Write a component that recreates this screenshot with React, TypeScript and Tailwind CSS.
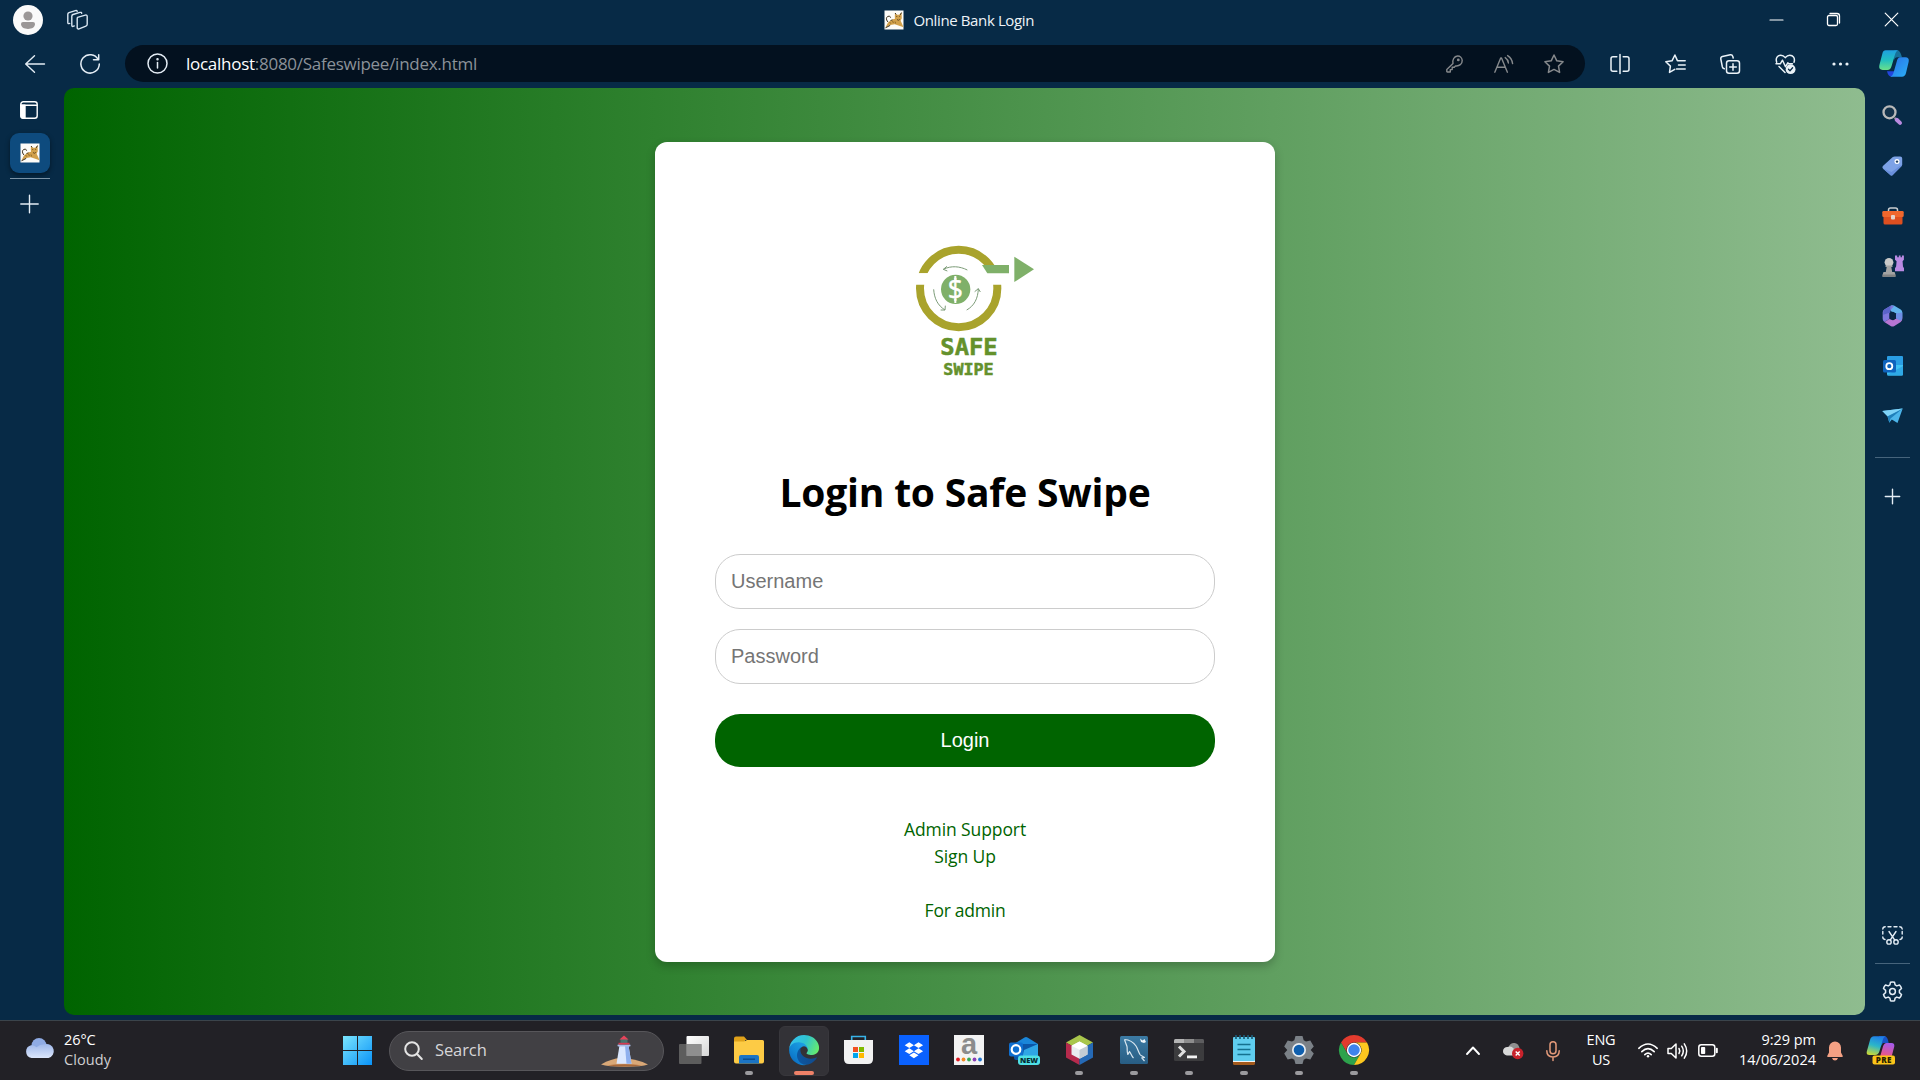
import React from "react";

type SvgProps = {
  w: number;
  h: number;
  vb?: string;
  className?: string;
  sw?: number;
  children: React.ReactNode;
};

/** Outline drawing that inherits the text colour. */
function Line({ w, h, vb, className = "", sw = 1.4, children }: SvgProps) {
  return (
    <svg
      width={w}
      height={h}
      viewBox={vb ?? `0 0 ${w} ${h}`}
      fill="none"
      stroke="currentColor"
      strokeWidth={sw}
      strokeLinecap="round"
      strokeLinejoin="round"
      className={`block shrink-0 overflow-visible ${className}`}
    >
      {children}
    </svg>
  );
}

/** Filled, multi-colour drawing. */
function Art({ w, h, vb, className = "", children }: SvgProps) {
  return (
    <svg width={w} height={h} viewBox={vb ?? `0 0 ${w} ${h}`} className={`block shrink-0 overflow-visible ${className}`}>
      {children}
    </svg>
  );
}

function CatIcon() {
  return (
    <Art w={20} h={20}>
      <rect x="0.5" y="0.5" width="19" height="19" fill="#fdfcf8" />
      <path d="M1.500 17.500 4 12.500 8 9.500l3-.8-.2-2.200L11 3l1.800 1.700h2.400L17.500 2.600l.3 5.600-1.200 2.600 1.200 2.400 1.700 4.100-4.300-1.500-4.400-1.600-4.600.8z" fill="#d2a14b" />
      <path d="m11 3 1.200 1.400M17.500 2.600 16.300 4.800M4 12C1.600 9.400 2 6.400 5 6.200c1 0 1.800.8 1.400 1.600M1.500 17.800l4.700-2.400M8 9.500l-1.400 1.500" stroke="#3c2f1c" strokeWidth="1" fill="none" />
      <path d="M12.300 6.500h.9M15.200 6.300h.9M13 9.500l1.400.8 1.400-.9" stroke="#5a421d" strokeWidth=".9" fill="none" />
      <path d="m8.400 10.500 1 2.500M5.500 12l1.300 1.600M11 11.500l.6 2" stroke="#8a6526" strokeWidth=".9" />
    </Art>
  );
}

function CopilotIcon() {
  return (
    <Art w={30} h={27} vb="0 0 90 81">
      <defs>
        <linearGradient id="cpA" x1="0" y1="0" x2="0" y2="1">
          <stop offset="0" stopColor="#1f9fe0" />
          <stop offset=".5" stopColor="#21bfc0" />
          <stop offset="1" stopColor="#6be08a" />
        </linearGradient>
        <linearGradient id="cpB" x1="0" y1="0" x2="1" y2="1">
          <stop offset="0" stopColor="#2a6fe8" />
          <stop offset="1" stopColor="#2ab0f5" />
        </linearGradient>
      </defs>
      <path d="M46 1h8c6 0 10 5 12 12l3 9H55c-6 0-9 5-10 10z" fill="#17719a" />
      <path d="M24 64h24l6-9-8 18c-2 5-5 7-9 7-6 0-11-6-13-16" fill="#2244dd" />
      <path d="M20 1h38c-5 1-8 6-10 13L38 47c-2 8-6 13-13 13H11C3 60-1 55 1 46L10 11C12 4 15 1 20 1" fill="url(#cpA)" />
      <path d="M64 22h15c8 0 12 5 10 13l-8 34c-2 8-6 11-12 11H34c5-1 8-6 10-13l9-32c2-8 5-13 11-13" fill="url(#cpB)" />
    </Art>
  );
}

function SafeSwipeLogo() {
  return (
    <Art w={170} h={170} vb="0 0 510 510">
      <defs>
        <clipPath id="ringTop">
          <path d="M0 0H510V136H262V160H0Z" />
        </clipPath>
        <clipPath id="ringBottom">
          <path d="M0 194H510V510H0Z" />
        </clipPath>
      </defs>
      <circle cx="206" cy="205.5" r="116" fill="none" stroke="#a9a32c" strokeWidth="24" clipPath="url(#ringTop)" />
      <circle cx="206" cy="205.5" r="116" fill="none" stroke="#a9a32c" strokeWidth="24" clipPath="url(#ringBottom)" />
      <path d="M276 135h81v25h-65z" fill="#7fb069" />
      <path d="M373 110 432 148 373 186Z" fill="#7fb069" />
      <circle cx="197" cy="208" r="44" fill="#7fb069" />
      <text x="196" y="236" textAnchor="middle" fontFamily="'Open Sans', sans-serif" fontSize="80" fill="#fff" stroke="#fff" strokeWidth="1.5">
        $
      </text>
      <path d="M196 168v12M196 237v12" stroke="#fff" strokeWidth="6" />
      <g fill="none" stroke="#7c9c78" strokeWidth="3">
        <path d="M232 150c-22-11-48-14-72-2m11-9-11 9 12 5" />
        <path d="M131 208c2 28 12 48 34 62m-13 0 13 0 1-13" />
        <path d="M230 270c22-12 34-34 35-64m-11 9 11-9 6 10" />
      </g>
      <g fill="#64912c" stroke="#64912c" strokeWidth="1.5" fontFamily="'DejaVu Sans Mono', monospace" fontWeight="700">
        <text x="151" y="404" fontSize="67" textLength="172" lengthAdjust="spacingAndGlyphs">
          SAFE
        </text>
        <text x="160" y="464.500" fontSize="47" textLength="151" lengthAdjust="spacingAndGlyphs">
          SWIPE
        </text>
      </g>
    </Art>
  );
}

function Slot({ className = "", children }: { className?: string; children: React.ReactNode }) {
  return <div className={`flex shrink-0 items-center justify-center ${className}`}>{children}</div>;
}

function TitleBar() {
  return (
    <div className="flex h-10 shrink-0 items-center">
      <div className="flex w-[884px] items-center pl-[13px]">
        <Art w={30} h={30}>
          <circle cx="15" cy="15" r="15" fill="#fafafa" />
          <circle cx="15" cy="11" r="4.6" fill="#9b9797" />
          <path d="M8 18.800q0-1.900 2-1.900h10q2 0 2 1.900c0 3.600-3 5.100-7 5.100s-7-1.500-7-5.100" fill="#9b9797" />
        </Art>
        <Line w={21} h={20} className="ml-6 text-[#d9e6f2]" sw={1.4}>
          <path d="M10.500 7.400 18.300 5.100q1.900-.4 1.900 1.500v7.700q0 1.400-1.300 1.900l-6.800 2.600q-1.900.6-1.900-1.400V9.100q0-1.300.3-1.700" />
          <path d="M7.300 15.900 6 16.400q-1.200.3-1.200-1.300V6.200q0-1.300 1.200-1.700L13 2.400q1.500-.3 1.700.9" />
          <path d="M2.700 13.400 1.900 13.600Q.8 13.800.8 12.500V4.300Q.8 3 2 2.600L8.400.6q1.400-.3 1.800.7" />
        </Line>
      </div>
      <CatIcon />
      <span className="ml-[9.500px] text-[15px] tracking-[-0.380px] text-[#eef3f8]">Online Bank Login</span>
      <div className="ml-auto flex text-white">
        <Slot className="w-[57.500px]">
          <Line w={13} h={13} sw={1.2}>
            <path d="M0 6h13" />
          </Line>
        </Slot>
        <Slot className="w-[57.500px]">
          <Line w={13} h={13} sw={1.3} className="-mt-px">
            <rect x=".5" y="2.500" width="10" height="10" rx="1.500" />
            <path d="M3 .5h7q2.500 0 2.500 2.500v7" />
          </Line>
        </Slot>
        <Slot className="w-[57.500px]">
          <Line w={13} h={13} sw={1.2} className="-mt-px">
            <path d="m.2.2 12.600 12.600M12.800.2.2 12.800" />
          </Line>
        </Slot>
      </div>
    </div>
  );
}

function Toolbar() {
  return (
    <div className="flex h-[47px] shrink-0 items-center text-[#e4edf5]">
      <Slot className="w-[70px]">
        <Line w={20} h={18}>
          <path d="M19.500 9H.8M9.500.7.7 9l8.800 8.300" />
        </Line>
      </Slot>
      <Slot className="w-10">
        <Line w={20} h={20} sw={1.5}>
          <path d="M18.200 5.500A9.200 9.200 0 1 0 19.300 10M18.700.8v5h-5.200" />
        </Line>
      </Slot>
      <div className="ml-[15px] flex h-[37px] w-[1460px] items-center rounded-full bg-[#03111f] pr-[6px] pl-[22px]">
        <Line w={21} h={21} sw={1.5}>
          <circle cx="10.500" cy="10.500" r="9.500" />
          <path d="M10.500 9.500v5.500" />
          <circle cx="10.500" cy="6.300" r=".5" fill="currentColor" />
        </Line>
        <span className="ml-[18px] text-[17px] tracking-[-0.27px] text-[#8b9299]">
          <span className="text-white">localhost</span>:8080/Safeswipee/index.html
        </span>
        <div className="ml-auto flex text-[#86898c]">
          <Slot className="w-[50px]">
            <Line w={17} h={18}>
              <path d="M.8 14.500 7 8.600C6.200 4.800 8 1.300 11.600 1 14 .9 16 3 16.200 5.400c.1 3.500-2.900 6-6.700 5.500L8.300 12.300H6.200v2.300H4.300V17H1.400q-.6 0-.6-.6z" />
              <circle cx="12.300" cy="4.900" r=".7" />
            </Line>
          </Slot>
          <Slot className="w-[50px]">
            <Line w={20} h={18}>
              <path d="M.8 17.200 6.700 3h.8l5.900 14.200M2.800 12.300h8.600M11.200 2.600q2.900 1.900 3.200 5.400M13.600.6q4.400 2.700 5 8" />
            </Line>
          </Slot>
          <Slot className="w-[50px]">
            <Line w={20} h={20} sw={1.5}>
              <path d="m10 1 2.800 5.800 6.300.9-4.600 4.400 1.100 6.300L10 15.400l-5.600 3 1.100-6.300L.9 7.700l6.300-.9z" />
            </Line>
          </Slot>
        </div>
      </div>
      <div className="ml-[7px] flex text-[#eaf2f8]">
        <Slot className="w-[55px]">
          <Line w={20} h={20} sw={1.5}>
            <path d="M6.800 2.700H3q-2 0-2 2v10.600q0 2 2 2h3.800M13.200 2.700H17q2 0 2 2v10.600q0 2-2 2h-3.800M10 .5v19" />
          </Line>
        </Slot>
        <Slot className="w-[56px]">
          <Line w={21} h={20} sw={1.5}>
            <path d="M12.500 6.800h7.700M13.500 11h6.700M11.500 15.100h8.700M9.700 15.400l-5.200 3 .9-6.300L.8 7.700l6.200-.9L9.900 1l2.500 5.600" />
          </Line>
        </Slot>
        <Slot className="w-[54px]">
          <Line w={20} h={20} sw={1.5}>
            <rect x="6.500" y="6.700" width="13" height="12.500" rx="2.500" />
            <path d="M13 9.700v6.600M9.700 13h6.600M4.300 14.700q-1.600-.4-2-2L.8 5Q.5 3 2.400 2.500L10.300.8q1.900-.3 2.500 1.600l.4 1.600" />
          </Line>
        </Slot>
        <Slot className="w-[56px]">
          <Line w={21} h={20} sw={1.5}>
            <path d="M1.700 8.200C.2 4.200 2.700 1.200 5.800 1.200c2 0 3.300.9 4.500 2.400 1.200-1.500 2.600-2.400 4.500-2.400 3.200 0 5.600 3 4.200 7M4 12.500l6 6M1 9.800h4.300l2.200-3.600 3 6.500 2.300-3.900 1 1h3.600" />
            <circle cx="15.600" cy="15.200" r="4.900" fill="currentColor" stroke="none" />
            <path d="m13.500 15.300 1.500 1.400 2.600-2.900" stroke="#072a46" strokeWidth="1.300" />
          </Line>
        </Slot>
        <Slot className="w-[54px]">
          <Line w={17} h={4}>
            <g fill="currentColor" stroke="none">
              <circle cx="2" cy="2" r="1.600" />
              <circle cx="8.500" cy="2" r="1.600" />
              <circle cx="15" cy="2" r="1.600" />
            </g>
          </Line>
        </Slot>
        <Slot className="w-[53px]">
          <CopilotIcon />
        </Slot>
      </div>
    </div>
  );
}

function TabStrip() {
  return (
    <div className="flex w-16 shrink-0 flex-col text-white">
      <div className="mt-[13px] ml-5">
        <Line w={18} h={18}>
          <rect x=".8" y=".8" width="16.400" height="16.400" rx="2.500" />
          <path d="M1 4.300h4V17H2.500Q1 17 1 15z" fill="currentColor" />
          <path d="M1 4.300h16" />
        </Line>
      </div>
      <div className="mt-[14px] ml-[10px] flex h-10 w-10 items-center justify-center rounded-[9px] bg-[#0e4b7e] shadow-[0_2px_5px_rgba(0,0,0,0.45)]">
        <CatIcon />
      </div>
      <div className="mt-[5px] ml-[10px] h-px w-10 bg-[#7c93a6]" />
      <div className="mt-4 ml-5 text-[#e4edf5]">
        <Line w={19} h={18} sw={1.4}>
          <path d="M.8 9h17.400M9.500.3v17.400" />
        </Line>
      </div>
    </div>
  );
}

function Sidebar() {
  return (
    <div className="flex w-[55px] shrink-0 flex-col items-center text-[#e4edf5]">
      <Slot className="mt-0.5 h-[50px]">
        <Art w={21} h={20}>
          <path d="m12.500 12.800 1.600 1.500" stroke="#888" strokeWidth="2" />
          <circle cx="7.500" cy="7.300" r="6" fill="#14324a" stroke="#b9b9b9" strokeWidth="2.300" />
          <path d="m14.700 14.800 3.300 3.100" stroke="#b98ae0" strokeWidth="4" strokeLinecap="round" />
        </Art>
      </Slot>
      <Slot className="h-[51px]">
        <Art w={21} h={20}>
          <path d="M10.500 1.200Q11.500.4 12.800.4l5.400.1q2 0 2 2v5.700q0 1.200-.8 2l-8.700 8.900q-1.200 1-2.400 0L.9 12.400q-1.100-1.300 0-2.500z" fill="#7da2e6" />
          <path d="m.9 12.400 7.400 6.700q1.200 1 2.400 0l8.700-8.900q.8-.8.8-2L9.500 16z" fill="#6a90dd" />
          <circle cx="15" cy="5.600" r="2.500" fill="#fff" />
          <circle cx="15" cy="5.600" r="1.200" fill="#20405f" />
        </Art>
      </Slot>
      <Slot className="h-[50px]">
        <Art w={22} h={18}>
          <path d="M6.500 5V3q0-2 2-2h5q2 0 2 2v2" fill="none" stroke="#c9cdd0" strokeWidth="1.500" />
          <rect x=".3" y="4" width="21.400" height="6" rx="1.200" fill="#f0672d" />
          <path d="M1.500 10h19v6q0 1.500-1.500 1.500H3q-1.500 0-1.500-1.500z" fill="#dd4f20" />
          <rect x="9" y="8" width="4" height="4.500" rx="1" fill="#e6d5cc" />
        </Art>
      </Slot>
      <Slot className="h-[50px]">
        <Art w={22} h={22}>
          <path d="M13 .5h2.200v1.700h1.600V.5h1.800v1.700h1.300V.5h2v4.300l-1.300 1.400.4 5.300 1 1.700v3h-9v-3l1.100-1.700.5-5.300L13 4.800z" fill="#b98ae3" />
          <circle cx="7" cy="7.300" r="4.400" fill="#c9c9c9" />
          <path d="M3.500 10.500h7v1.600H9.300l.9 5h2.400q1 2 .9 4.600H.5q0-2.600 1-4.600h2.300l.9-5H3.500z" fill="#a3a3a3" />
          <path d="M.5 19.500h13v2.200H.5z" fill="#828282" />
        </Art>
      </Slot>
      <Slot className="h-[50px]">
        <Art w={21} h={22}>
          <path d="M9 .6q1.500-.8 3 0l6.700 3.900q1.600 1 1.600 2.800v4.500L14 8.500 8.500 6z" fill="#62b3ee" />
          <path d="M9 .6 2.300 4.500Q.7 5.500.7 7.300v6.800q0 1.800 1.600 2.800l5.200-3V6.500L12 1z" fill="#7e77dd" />
          <path d="M2.300 16.900 9 21.200q1.500.8 3 0l6.700-4.300q1.600-1 1.600-2.800v-2.500L14 13.500l-3 1.800-3.500-1.400z" fill="#b775d3" />
          <path d="M9 .6 8.300 2v5.500l-7 2.300v-3q0-1.500 1-2.300z" fill="#5a63c9" />
          <path d="M20.300 7.500v5.300q0 2-1.600 3L14 13.500v-5z" fill="#6f8ee6" />
          <path d="m7.500 8.300 3.500-1.500 3 1.700v5l-3 1.800-3.500-1.800z" fill="#0b2545" />
        </Art>
      </Slot>
      <Slot className="h-[50px]">
        <Art w={20} h={20}>
          <rect x="4" width="16" height="12" rx="1" fill="#2a9ee4" />
          <path d="M4 9h16v9q0 1.500-1.500 1.500h-13Q4 19.500 4 18z" fill="#3fc1f3" />
          <path d="m4 19 16-9v8.500q0 1-1 1H5z" fill="#2fa9e6" />
          <rect y="4" width="13" height="12.500" rx="1.500" fill="#0f63bd" />
          <circle cx="6.300" cy="10.200" r="3" fill="none" stroke="#fff" strokeWidth="1.800" />
        </Art>
      </Slot>
      <Slot className="h-[50px]">
        <Art w={21} h={16}>
          <path d="M.3 3 20.700.5 15.500 15 9.800 11.500 7.300 14.800 5.500 8.300z" fill="#4cb5ea" />
          <path d="M5.500 8.300 20.700.5 8.500 10.500 7.300 14.800z" fill="#1f7fba" />
          <path d="M.3 3 20.700.5 5.500 8.300z" fill="#7fd3f7" />
        </Art>
      </Slot>
      <div className="mt-[16px] h-px w-[35px] bg-[#46647c]" />
      <Line w={15} h={15} sw={1.4} className="mt-[31px]">
        <path d="M.3 7.500h14.400M7.500.3v14.400" />
      </Line>
      <Line w={21} h={19} sw={1.4} className="mt-auto">
        <path d="M3 13.500q-2.200-.3-2.200-2.500M.8 8V5.500M.8 3q.2-2.200 2.400-2.200M6 .8h3M12 .8h3M17.800.8q2.200.2 2.400 2.200M20.200 5.500V8M20.200 11q0 2.200-2.200 2.500" />
        <path d="m7 5.500 5.600 8.400M14 5.500l-5.600 8.400" />
        <circle cx="7" cy="15.900" r="2.200" />
        <circle cx="14" cy="15.900" r="2.200" />
      </Line>
      <div className="mt-[18px] h-px w-[35px] bg-[#46647c]" />
      <Line w={21} h={21} sw={1.5} className="mt-[17px] mb-[18px]">
        <path d="M8.500 1.200q2-.5 4 0l.6 2.700 1.700 1 2.700-.9q1.500 1.500 2 3.500L17.400 9.400v2.200l2.100 1.900q-.5 2-2 3.500l-2.700-.9-1.700 1-.6 2.700q-2 .5-4 0l-.6-2.700-1.700-1-2.700.9q-1.500-1.500-2-3.500l2.100-1.900V9.400L1.500 7.500q.5-2 2-3.500l2.700.9 1.700-1z" />
        <circle cx="10.500" cy="10.500" r="2.900" />
      </Line>
    </div>
  );
}

function LoginCard() {
  return (
    <div className="mt-[54px] ml-px flex h-[820px] w-[620px] flex-col rounded-[12px] bg-white px-[60px] shadow-[0_4px_10px_rgba(0,0,0,0.22)]">
      <div className="mt-[78px] ml-[175px]">
        <SafeSwipeLogo />
      </div>
      <h1 className="mt-[70px] text-center text-[39px] leading-[64px] font-bold tracking-[-0.2px] text-black">Login to Safe Swipe</h1>
      <input
        className="mt-[30px] h-[55px] w-full rounded-[25px] border border-[#ccc] px-[15px] font-['Liberation_Sans',sans-serif] text-[20px] placeholder:text-[#757575]"
        placeholder="Username"
      />
      <input
        type="password"
        className="mt-5 h-[55px] w-full rounded-[25px] border border-[#ccc] px-[15px] font-['Liberation_Sans',sans-serif] text-[20px] placeholder:text-[#757575]"
        placeholder="Password"
      />
      <button className="mt-[30px] h-[53px] w-full rounded-[25px] bg-[#006400] pb-0.5 font-['Liberation_Sans',sans-serif] text-[20px] text-white">
        Login
      </button>
      <div className="mt-[49px] flex flex-col items-center text-[17.500px] leading-[27px] tracking-[-0.1px] text-[#006400]">
        <a>Admin Support</a>
        <a>Sign Up</a>
        <a className="mt-[27px] tracking-[-0.250px]">For admin</a>
      </div>
    </div>
  );
}

function EdgeIcon() {
  return (
    <Art w={30} h={30} vb="4 4 256 256">
      <defs>
        <linearGradient id="eA" x1="0" y1="0" x2="1" y2="0">
          <stop offset="0" stopColor="#0c59a4" />
          <stop offset="1" stopColor="#114a8b" />
        </linearGradient>
        <linearGradient id="eB" x1=".8" y1=".2" x2=".2" y2="1">
          <stop offset="0" stopColor="#1b9de2" />
          <stop offset=".5" stopColor="#1187d4" />
          <stop offset="1" stopColor="#0b6abf" />
        </linearGradient>
        <linearGradient id="eC" x1="0" y1=".3" x2="1" y2=".6">
          <stop offset="0" stopColor="#35c1f1" />
          <stop offset=".5" stopColor="#2fc3cf" />
          <stop offset="1" stopColor="#66eb6e" />
        </linearGradient>
      </defs>
      <path fill="url(#eA)" d="M235.680 195.460a93.730 93.730 0 0 1-10.540 4.710 101.870 101.870 0 0 1-35.900 6.460c-47.320 0-88.540-32.550-88.540-74.320A31.480 31.480 0 0 1 117.130 105c-42.800 1.800-53.800 46.400-53.800 72.530 0 73.880 68.090 81.370 82.760 81.370 7.910 0 19.840-2.300 27-4.560l1.310-.44a128.340 128.340 0 0 0 66.600-52.800 4 4 0 0 0-5.320-5.640Z" />
      <path fill="url(#eB)" d="M110.340 246.340A79.200 79.200 0 0 1 87.600 225a80.720 80.720 0 0 1 29.530-120c3.120-1.470 8.450-4.130 15.540-4a32.350 32.350 0 0 1 25.690 13 31.880 31.880 0 0 1 6.360 18.660c0-.21 24.460-79.600-80-79.600-43.900 0-80 41.660-80 78.210a130.150 130.150 0 0 0 12.110 56 128 128 0 0 0 156.380 67.110 75.550 75.550 0 0 1-62.780-8Z" />
      <path fill="url(#eC)" d="M156.940 153.780c-.81 1.050-3.300 2.500-3.300 5.660 0 2.610 1.700 5.120 4.720 7.230 14.380 10 41.490 8.680 41.560 8.680a59.560 59.560 0 0 0 30.270-8.350A61.380 61.380 0 0 0 260.600 114c.26-22.410-8-37.310-11.340-43.910C228.090 28.760 182.350 5 132.610 5a128 128 0 0 0-128 126.200c.48-36.540 36.800-66.050 80-66.050 3.500 0 23.460.34 42 10.070 16.340 8.580 24.900 18.940 30.850 29.210 6.180 10.670 7.280 24.150 7.280 29.520 0 5.370-2.740 13.330-7.800 19.830Z" />
    </Art>
  );
}

const apps: { name: string; state?: "open" | "active"; icon: React.ReactNode }[] = [
  {
    name: "Task view",
    icon: (
      <Art w={30} h={28}>
        <defs>
          <linearGradient id="tv" x1="0" y1="0" x2="1" y2="1">
            <stop offset="0" stopColor="#fff" />
            <stop offset="1" stopColor="#d6d6d6" />
          </linearGradient>
        </defs>
        <rect x="7.500" width="22.500" height="20" rx="1" fill="url(#tv)" />
        <rect y="8" width="22.500" height="20" rx="1" fill="#6a6a6a" opacity=".82" />
        <rect x="7.500" y="8" width="15" height="12" fill="#8f8f8f" />
      </Art>
    ),
  },
  {
    name: "File Explorer",
    state: "open",
    icon: (
      <Art w={30} h={28}>
        <path d="M0 2.500Q0 .5 2 .5h8l3 3.500h-2v6H0z" fill="#e0a21a" />
        <path d="M0 5.500h10l3-1.500h15.500Q30 4 30 5.500v20q0 2-2 2H2q-2 0-2-2z" fill="#fdcb45" />
        <path d="M5 27.500V21q0-2 2-2h16q2 0 2 2v6.500z" fill="#1b74c4" />
        <path d="M9 23.200h12" stroke="#0b4b8d" strokeWidth="1.400" />
      </Art>
    ),
  },
  { name: "Edge", state: "active", icon: <EdgeIcon /> },
  {
    name: "Store",
    icon: (
      <Art w={30} h={30}>
        <path d="M7.700 6V1.500h13.600V6" fill="none" stroke="#38b3e8" strokeWidth="1.600" />
        <path d="M0 5h29v19q0 5-5 5H5q-5 0-5-5z" fill="#f2f2f2" />
        <path d="M9 12h5v5H9z" fill="#f25022" />
        <path d="M15 12h5v5h-5z" fill="#7fba00" />
        <path d="M9 18h5v5H9z" fill="#00a4ef" />
        <path d="M15 18h5v5h-5z" fill="#ffb900" />
      </Art>
    ),
  },
  {
    name: "Dropbox",
    icon: (
      <Art w={30} h={30}>
        <path d="M0 0h30v30H0z" fill="#0a61fe" />
        <path
          d="m10.300 7.300 4.600 2.900-4.600 2.900-4.600-2.900zM19.500 7.300l4.600 2.900-4.600 2.900-4.600-2.900zM10.300 13.300l4.600 2.900-4.600 2.900-4.600-2.900zM19.500 13.300l4.600 2.900-4.600 2.900-4.600-2.900zM14.900 17.400l4.600 2.900-4.600 3-4.600-3z"
          fill="#fff"
        />
      </Art>
    ),
  },
  {
    name: "Amazon",
    icon: (
      <Art w={30} h={30}>
        <path d="M0 0h30v30H0z" fill="#f3f3f3" />
        <text x="15" y="18.500" textAnchor="middle" fontFamily="'Liberation Sans', sans-serif" fontWeight="700" fontSize="29" fill="#8c8c8c">
          a
        </text>
        <circle cx="4" cy="24.500" r="1.900" fill="#e01a22" />
        <circle cx="9.500" cy="24.500" r="1.900" fill="#f08a24" />
        <circle cx="15" cy="24.500" r="1.900" fill="#35a853" />
        <circle cx="20.500" cy="24.500" r="1.900" fill="#8a3fb8" />
        <circle cx="26" cy="24.500" r="1.900" fill="#1f74d0" />
      </Art>
    ),
  },
  {
    name: "Outlook (new)",
    icon: (
      <Art w={32} h={30}>
        <path d="M6 9 16.500 2.500q1.500-.8 3 0L30 9v12H6z" fill="#1a86d9" />
        <path d="M6 9h24v14q0 2-2 2H8q-2 0-2-2z" fill="#0b56a8" />
        <path d="m16 15 14-6v15H14z" fill="#2fa6e6" />
        <rect x="1" y="7.500" width="14" height="14" rx="2" fill="#0f6fd0" />
        <circle cx="8" cy="14.500" r="4.300" fill="none" stroke="#fff" strokeWidth="2.200" />
        <rect x="10" y="20.500" width="22" height="9.500" rx="3" fill="#4fe0e6" />
        <text x="21" y="28" textAnchor="middle" fontFamily="'Open Sans', sans-serif" fontWeight="800" fontSize="7.500" fill="#062c33">
          NEW
        </text>
      </Art>
    ),
  },
  {
    name: "NetBeans",
    state: "open",
    icon: (
      <Art w={27} h={30}>
        <path d="M13.500 0 27 7.500 13.500 15 0 7.500z" fill="#a9c64c" />
        <path d="M0 7.500 13.500 15v15L0 22.500z" fill="#b62a4c" />
        <path d="M27 7.500 13.500 15v15L27 22.500z" fill="#2569b5" />
        <path d="m13.500 6.500 8 4.300v8.600l-8 4.400-8-4.400v-8.600z" fill="#e9edf0" />
        <path d="m13.500 14.800 8-4v8.600l-8 4.400z" fill="#c3ccd4" />
        <path d="m13.500 6.500 8 4.300-8 4-8-4z" fill="#fff" />
      </Art>
    ),
  },
  {
    name: "MySQL Workbench",
    state: "open",
    icon: (
      <Art w={28} h={28}>
        <defs>
          <linearGradient id="my" x1="0" y1="0" x2="0" y2="1">
            <stop offset="0" stopColor="#3c7ba4" />
            <stop offset="1" stopColor="#285d83" />
          </linearGradient>
        </defs>
        <rect width="28" height="28" rx="1.500" fill="url(#my)" />
        <path
          d="M4.500 3.500c4 .2 8.500 2 11.500 6.500 1.800 2.800 2.300 6 4 8.500 1 1.300 3 1.800 4.500 3l-2.700.4 2.700 3.100M4.500 3.500c.8 3 1.800 4.500 2.500 7 .5 2.500-.3 5 .8 8 .8-1 1.200-2.300 1.700-3 1.500 2 1.800 4.500 4 6.500"
          fill="none"
          stroke="#d8e6ef"
          strokeWidth="1.200"
          strokeLinejoin="round"
        />
        <path d="m20 2.500 2.500 2 2-1.500L26 6l-2 1-3-1z" fill="#eef5f9" />
      </Art>
    ),
  },
  {
    name: "Terminal",
    state: "open",
    icon: (
      <Art w={30} h={22}>
        <rect width="30" height="22" rx="1.500" fill="#3c3c3e" />
        <path d="M1.500 0H20v4H0V1.500Q0 0 1.500 0" fill="#b4b4b4" />
        <path d="M10 0h10v4H10z" fill="#8d8d8d" />
        <path d="M20 0h8.500Q30 0 30 1.500V4H20z" fill="#5d5d5f" />
        <path d="m5 7.500 5 5-5 5" fill="none" stroke="#dedede" strokeWidth="3" />
        <path d="M13 16.500h10v2.800H13z" fill="#f4f4f4" />
      </Art>
    ),
  },
  {
    name: "Notepad",
    state: "open",
    icon: (
      <Art w={22} h={30}>
        <path d="M0 26h22v2.500q0 1.500-1.500 1.500h-19Q0 30 0 28.500z" fill="#a35a1c" />
        <path d="M0 24h22v3H0z" fill="#f4f4f4" />
        <rect y="2" width="22" height="24" rx="1" fill="#5fcdee" />
        <path d="M4.500 9.500h13M4.500 14.500h13M4.500 19.500h13" stroke="#14718f" strokeWidth="1.700" />
        <path d="M3 0v4M7 0v4M11 0v4M15 0v4M19 0v4" stroke="#1c5d78" strokeWidth="1.700" />
      </Art>
    ),
  },
  {
    name: "Settings",
    state: "open",
    icon: (
      <Art w={30} h={30}>
        <path
          d="M11.500 1h7l1.200 4.300 2.300 1.300 4.300-1.100 3.500 6-3.100 3.500 3.100 3.500-3.500 6-4.300-1.100-2.300 1.300L18.500 29h-7l-1.200-4.300L8 23.400l-4.300 1.100-3.500-6L3.300 15 .2 11.500l3.500-6L8 6.600l2.300-1.300z"
          fill="#7b8187"
        />
        <circle cx="15" cy="15" r="7" fill="#e8edf2" />
        <circle cx="15" cy="15" r="5.300" fill="#0f5fae" />
      </Art>
    ),
  },
  {
    name: "Chrome",
    state: "open",
    icon: (
      <Art w={30} h={30} vb="0 0 48 48">
        <path d="M24 12h20.800A24 24 0 0 0 3.200 12l10.400 18A12 12 0 0 1 24 12z" fill="#e33b2e" />
        <path d="M34.400 30 24 48A24 24 0 0 1 3.200 12l10.400 18a12 12 0 0 0 20.800 0z" fill="#2da24c" />
        <path d="M44.800 12A24 24 0 0 1 24 48l10.400-18A12 12 0 0 0 24 12z" fill="#fcc71f" />
        <circle cx="24" cy="24" r="11.500" fill="#fff" />
        <circle cx="24" cy="24" r="9.200" fill="#3f83ee" />
      </Art>
    ),
  },
];

function Lighthouse() {
  return (
    <Art w={47} h={32}>
      <path d="M0 29.500q10-6 20-6.500 14 0 27 6.500-6 2.200-23 2.200T0 29.500" fill="#d9a877" />
      <path d="M6 30.300q17-2 35 0-8 1.300-17 1.300T6 30.300" fill="#a8683a" />
      <path d="m18.500 10.500-3 18.300h15L27.500 10.500z" fill="#dbe8ff" />
      <path d="m24 10.500 1.500 18.300h5L27.500 10.500z" fill="#8fb0ee" />
      <rect x="16.500" y="9.500" width="13" height="2" rx=".8" fill="#a9bde8" />
      <rect x="19.500" y="4" width="7" height="4.500" fill="#46746c" />
      <path d="M18.500 4.500 23 .5l4.500 4z" fill="#e8435a" />
      <path d="M17.500 7.800h11v1.700h-11z" fill="#d63a52" />
    </Art>
  );
}

function Taskbar() {
  return (
    <div className="flex h-[60px] shrink-0 items-center border-t border-[#3b444b] bg-[#222126] text-white">
      <div className="flex w-[330px] items-center pl-[25px]">
        <Art w={30} h={20} className="-mt-[5px]">
          <defs>
            <linearGradient id="cl" x1="0" y1="0" x2="0" y2="1">
              <stop offset="0" stopColor="#9fb8ea" />
              <stop offset="1" stopColor="#dbe6fb" />
            </linearGradient>
          </defs>
          <circle cx="14" cy="7.500" r="7.500" fill="#8fabe4" />
          <path d="M6.500 20A6.500 6.500 0 0 1 6 7.300q3-.4 5.500 2Q15 6 20 6.300A7 7 0 0 1 23.500 20z" fill="url(#cl)" />
        </Art>
        <div className="-mt-0.5 ml-[9px] flex flex-col text-[14.500px] leading-5">
          <span className="tracking-[-0.1px]">26°C</span>
          <span className="tracking-[0.1px] text-[#d0d0d2]">Cloudy</span>
        </div>
      </div>
      <Slot className="w-[55px]">
        <Art w={29} h={29}>
          <defs>
            <linearGradient id="win" x1="0" y1="0" x2="29" y2="29" gradientUnits="userSpaceOnUse">
              <stop offset="0" stopColor="#7ae5fd" />
              <stop offset="1" stopColor="#0a93f8" />
            </linearGradient>
          </defs>
          <path d="M0 0h14v14H0zM15 0h14v14H15zM0 15h14v14H0zM15 15h14v14H15z" fill="url(#win)" />
        </Art>
      </Slot>
      <div className="ml-1 flex h-10 w-[275px] items-center rounded-full border border-[#57565a] bg-[#414044] pr-[15px] pl-[14px]">
        <Line w={19} h={19} sw={2} className="text-[#e4e4e4]">
          <circle cx="8" cy="8" r="6.800" />
          <path d="m13 13 4.800 5" />
        </Line>
        <span className="ml-3 text-[16.500px] tracking-[-0.1px] text-[#d6d6d8]">Search</span>
        <div className="ml-auto">
          <Lighthouse />
        </div>
      </div>
      <div className="ml-[2.500px] flex">
        {apps.map((a) => (
          <Slot key={a.name} className="relative h-[50px] w-[55px]">
            {a.state === "active" && <div className="absolute inset-x-[2.500px] inset-y-0 rounded-[6px] border border-[#38373c] bg-[#333237]" />}
            <div className="relative -mt-px">{a.icon}</div>
            {a.state === "open" && <div className="absolute bottom-px left-[23.500px] h-1 w-2 rounded-full bg-[#9b9a9e]" />}
            {a.state === "active" && <div className="absolute bottom-px left-[17.500px] h-1 w-5 rounded-full bg-[#ee8168]" />}
          </Slot>
        ))}
      </div>
      <div className="ml-auto flex items-center pr-6">
        <Slot className="w-10">
          <Line w={14} h={9} sw={1.900}>
            <path d="m1 8 6-6.500L13 8" />
          </Line>
        </Slot>
        <Slot className="w-10">
          <Art w={20} h={18}>
            <path d="M5.500 5Q7.500.5 11.500 1q4 .5 5 5l-6 5z" fill="#8f8f8f" />
            <path d="M4 13.500A4.200 4.200 0 0 1 4.500 5q4-1.500 6 1.500l5.500 3v4z" fill="#d8d8d8" />
            <circle cx="14.700" cy="11.500" r="5.700" fill="#c8222b" />
            <path d="m12.700 9.500 4 4m0-4-4 4" stroke="#fff" strokeWidth="1.400" />
          </Art>
        </Slot>
        <Slot className="w-10">
          <Line w={14} h={20} sw={1.500} className="text-[#e39a7a]">
            <rect x="4" y=".8" width="6" height="12" rx="3" />
            <path d="M.8 9.800q0 6.200 6.200 6.200t6.200-6.200M7 16v3.500" />
          </Line>
        </Slot>
        <div className="-mt-px flex w-14 flex-col text-center text-[14.500px] leading-5 tracking-[-0.2px]">
          <span>ENG</span>
          <span>US</span>
        </div>
        <Line w={20} h={15} sw={1.600} className="ml-[9px]">
          <path d="M.8 5.300q9.200-8.600 18.400 0M3.800 8.600q6.200-5.800 12.400 0M6.800 11.600q3.200-3 6.400 0" />
          <circle cx="10" cy="13.300" r="1.200" fill="currentColor" stroke="none" />
        </Line>
        <Line w={21} h={18} sw={1.500} className="ml-[9px]">
          <path d="M1 6.500h3.300L9 2v14l-4.700-4.500H1zM12 6.500q1.600 2.500 0 5M14.700 4.200q3.200 4.800 0 9.600M17.300 1.800q4.800 7.200 0 14.400" />
        </Line>
        <Line w={20} h={13} sw={1.500} className="ml-[10px]">
          <rect x=".8" y=".8" width="16" height="11.400" rx="2.500" />
          <path d="M18.800 4.700v3.600" strokeWidth="2" />
          <rect x="3" y="3" width="4.200" height="7" rx=".8" fill="currentColor" stroke="none" />
        </Line>
        <div className="-mt-0.5 flex w-[98px] flex-col text-right text-[14.500px] leading-5">
          <span className="tracking-[-0.05px]">9:29 pm</span>
          <span>14/06/2024</span>
        </div>
        <Art w={16} h={20} className="ml-[11px]">
          <path d="M8 .5a6 6 0 0 1 6 6v5l1.800 3.600q.2.900-.8.900H1q-1 0-.8-.9L2 11.500v-5a6 6 0 0 1 6-6M5 17h6q-.8 2.500-3 2.500T5 17" fill="#f4a184" />
        </Art>
        <Art w={30} h={29} className="ml-[23px]">
          <defs>
            <linearGradient id="prA" x1=".6" y1="0" x2=".3" y2="1">
              <stop offset="0" stopColor="#1f7de8" />
              <stop offset=".5" stopColor="#2bb6c9" />
              <stop offset="1" stopColor="#c6d83a" />
            </linearGradient>
            <linearGradient id="prB" x1=".6" y1="0" x2=".3" y2="1">
              <stop offset="0" stopColor="#a65bea" />
              <stop offset="1" stopColor="#f0567f" />
            </linearGradient>
          </defs>
          <path d="M13 .3h5.500Q21 .5 22 4l.7 3H17l-4 6z" fill="#1752c5" />
          <path d="M8 .3h12q-2.500.5-3.300 4L13.500 15q-1 4-4.500 4H3.500Q0 19 .8 15.500L4 4Q5 .3 8 .3" fill="url(#prA)" />
          <path d="M20.500 7h5q3.500 0 2.700 3.800L25.500 21H14l3-10.500Q18 7 20.500 7" fill="url(#prB)" />
          <rect x="6.500" y="19.500" width="22.500" height="9" rx="2" fill="#fcc419" />
          <text x="17.800" y="27" textAnchor="middle" fontFamily="'Open Sans', sans-serif" fontWeight="800" fontSize="8" letterSpacing=".4" fill="#2a2200">
            PRE
          </text>
        </Art>
      </div>
    </div>
  );
}

export default function App() {
  return (
    <div className="flex h-[1080px] w-[1920px] flex-col overflow-hidden bg-[#072a46] font-['Open_Sans',sans-serif]">
      <TitleBar />
      <Toolbar />
      <div className="mt-px flex h-[932px] shrink-0">
        <TabStrip />
        <main className="flex h-[927px] w-[1801px] items-start justify-center rounded-[10px] bg-[linear-gradient(to_right,#006400,#8fbc8f)]">
          <LoginCard />
        </main>
        <Sidebar />
      </div>
      <Taskbar />
    </div>
  );
}
